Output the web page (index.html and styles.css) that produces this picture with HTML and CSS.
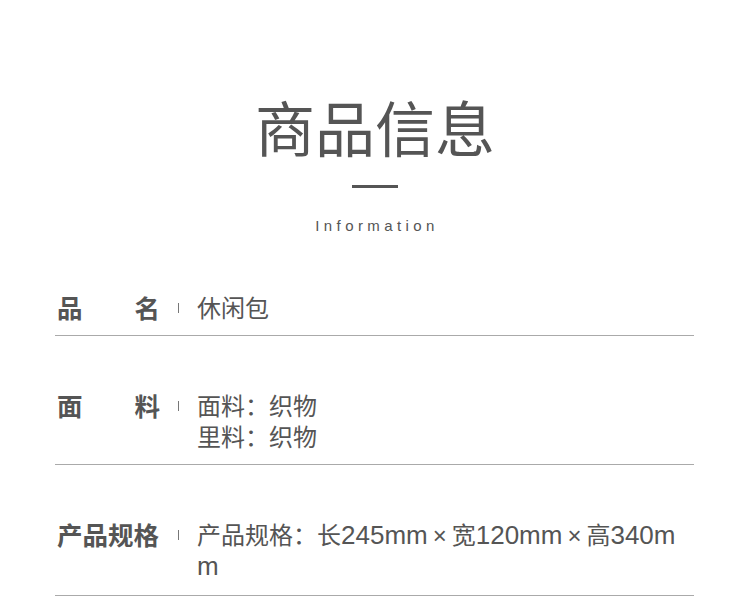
FILE: index.html
```html
<!DOCTYPE html>
<html lang="zh-CN">
<head>
<meta charset="UTF-8">
<title>商品信息</title>
<meta name="viewport" content="width=device-width,initial-scale=1">
<link rel="stylesheet" href="styles.css">
</head>
<body>
<!-- heading -->
<div class="head">
  <h1>商品信息</h1>
  <div class="dash"></div>
  <div class="en">Information</div>
</div>

<!-- spec rows -->
<div class="specs">
  <div class="row">
    <div class="label">品<span>名</span></div>
    <div class="sep"></div>
    <div class="val">休闲包</div>
  </div>
  <div class="row">
    <div class="label">面<span>料</span></div>
    <div class="sep"></div>
    <div class="val">面料：织物<br>里料：织物</div>
  </div>
  <div class="row">
    <div class="label">产品规格</div>
    <div class="sep"></div>
    <div class="val">产品规格：长<span class="num">245mm</span><span class="x">×</span>宽<span class="num">120mm</span><span class="x">×</span>高<span class="num">340mm</span></div>
  </div>
</div>
</body>
</html>
```

FILE: styles.css
```css
body{margin:0;background:#fff;color:#555;font-family:"Liberation Sans","Noto Sans CJK SC",sans-serif}
/* heading */
.head{display:flex;flex-direction:column;align-items:center;padding-top:86px}
.head h1{margin:0;font-family:"Noto Sans CJK SC",sans-serif;font-weight:400;font-size:60px;line-height:80px;color:#555}
.dash{width:46px;height:3px;background:#555;margin-top:19px}
.en{margin-top:28px;font-size:15px;letter-spacing:4.4px;padding-left:4px;color:#555;line-height:20px}
/* rows */
.specs{margin:0 56px 0 55px}
.row{display:flex;align-items:flex-start;padding:55px 0 13px 2px;border-bottom:1px solid #aaa}
.row + .row{padding-top:53px}
.row:last-child{padding-bottom:15px}
.label{width:103px;flex-shrink:0;white-space:nowrap;display:flex;justify-content:space-between;font-family:"Noto Sans CJK SC",sans-serif;font-weight:700;font-size:25.5px;line-height:31px;color:#555}
.sep{width:1px;height:10px;background:#777;margin:12px 18px 0 18px}
.val{width:480px;font-family:"Noto Sans CJK SC",sans-serif;font-size:24px;line-height:31px;color:#555;word-break:break-all}
.num{font-family:"Liberation Sans",sans-serif;font-size:26px;line-height:1}
.x{font-family:"Liberation Sans",sans-serif;font-size:24px;line-height:1;margin:0 5px}
```
